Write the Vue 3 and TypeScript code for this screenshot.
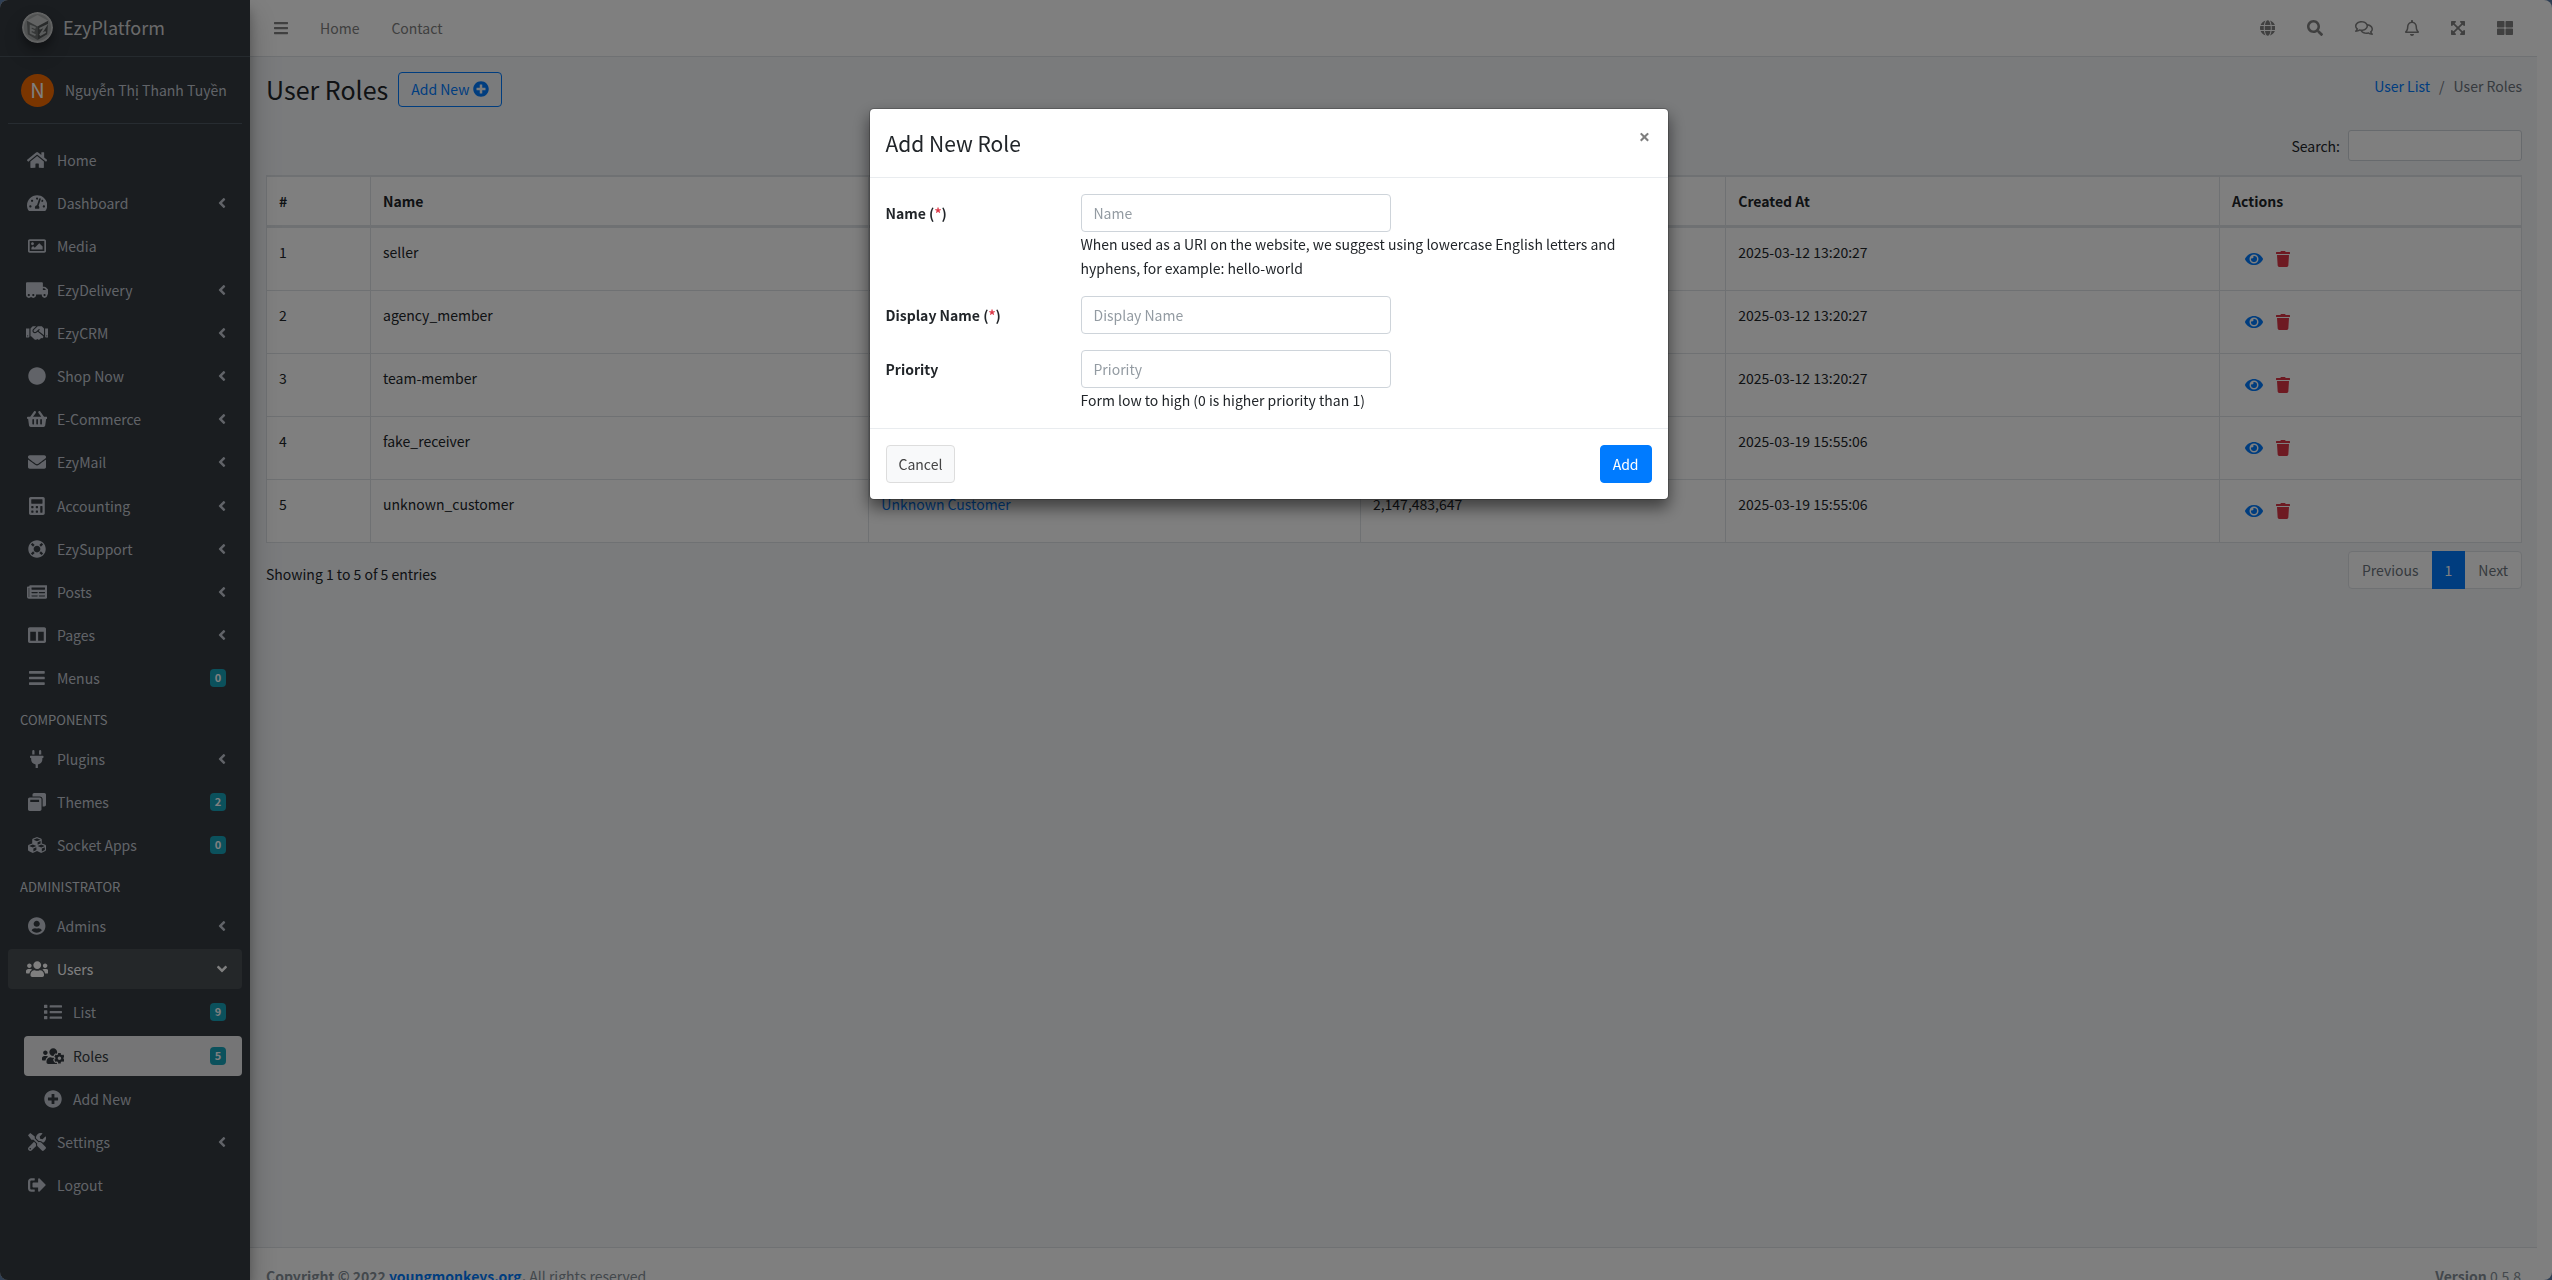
<script setup lang="ts">
import { h, ref } from 'vue'

const icons: Record<string, [number, string]> = {
  bars: [448, 'M16 132h416c8.8 0 16-7.200 16-16V76c0-8.800-7.200-16-16-16H16C7.200 60 0 67.200 0 76v40c0 8.800 7.200 16 16 16zm0 160h416c8.800 0 16-7.200 16-16v-40c0-8.800-7.200-16-16-16H16c-8.800 0-16 7.200-16 16v40c0 8.800 7.200 16 16 16zm0 160h416c8.800 0 16-7.200 16-16v-40c0-8.800-7.200-16-16-16H16c-8.800 0-16 7.200-16 16v40c0 8.800 7.200 16 16 16z'],
  home: [576, 'M280.370 148.260L96 300.110V464a16 16 0 0 0 16 16l112.060-.29a16 16 0 0 0 15.920-16V368a16 16 0 0 1 16-16h64a16 16 0 0 1 16 16v95.640a16 16 0 0 0 16 16.050L464 480a16 16 0 0 0 16-16V300L295.670 148.260a12.190 12.190 0 0 0-15.300 0zM571.600 251.470L488 182.560V44.050a12 12 0 0 0-12-12h-56a12 12 0 0 0-12 12v72.610L318.470 43a48 48 0 0 0-61 0L4.340 251.470a12 12 0 0 0-1.600 16.900l25.500 31A12 12 0 0 0 45.150 301l235.220-193.740a12.190 12.190 0 0 1 15.300 0L530.900 301a12 12 0 0 0 16.900-1.600l25.500-31a12 12 0 0 0-1.700-16.930z'],
  dashboard: [576, 'M288 32C128.940 32 0 160.940 0 320c0 52.800 14.250 102.260 39.060 144.800 5.610 9.620 16.300 15.200 27.440 15.200h443c11.140 0 21.830-5.580 27.440-15.200C561.750 422.260 576 372.800 576 320c0-159.060-128.940-288-288-288zm0 64c14.710 0 26.580 10.130 30.320 23.650-1.110 2.260-2.640 4.230-3.450 6.670l-9.220 27.670c-5.130 3.490-10.970 6.010-17.640 6.010-17.670 0-32-14.330-32-32S270.330 96 288 96zM96 384c-17.670 0-32-14.330-32-32s14.330-32 32-32 32 14.330 32 32-14.330 32-32 32zm48-160c-17.670 0-32-14.330-32-32s14.330-32 32-32 32 14.330 32 32-14.330 32-32 32zm246.770-72.410l-61.330 184C343.130 347.330 352 364.540 352 384c0 11.720-3.380 22.550-8.880 32H232.880c-5.500-9.450-8.880-20.280-8.880-32 0-33.940 26.500-61.430 59.900-63.590l61.340-184.010c4.170-12.560 17.730-19.450 30.360-15.170 12.570 4.190 19.350 17.790 15.170 30.360zm14.660 57.200l15.520-46.550c3.470-1.290 7.130-2.230 11.050-2.230 17.670 0 32 14.330 32 32s-14.330 32-32 32c-11.380-.01-20.890-6.280-26.570-15.220zM480 384c-17.670 0-32-14.330-32-32s14.330-32 32-32 32 14.330 32 32-14.330 32-32 32z'],
  image: [512, 'M464 64H48C21.490 64 0 85.490 0 112v288c0 26.510 21.490 48 48 48h416c26.510 0 48-21.490 48-48V112c0-26.510-21.490-48-48-48zm-6 336H54a6 6 0 0 1-6-6V118a6 6 0 0 1 6-6h404a6 6 0 0 1 6 6v276a6 6 0 0 1-6 6zM128 152c-22.091 0-40 17.909-40 40s17.909 40 40 40 40-17.909 40-40-17.909-40-40-40zM96 352h320v-80l-87.515-87.515c-4.686-4.686-12.284-4.686-16.971 0L192 304l-39.515-39.515c-4.686-4.686-12.284-4.686-16.971 0L96 304v48z'],
  truck: [640, 'M621.300 237.300l-58.500-58.500c-12-12-28.300-18.700-45.300-18.700H480V64c0-17.700-14.300-32-32-32H32C14.300 32 0 46.300 0 64v336c0 44.200 35.800 80 80 80 26.300 0 49.400-12.900 64-32.400 14.600 19.600 37.700 32.400 64 32.400 44.200 0 80-35.800 80-80 0-5.500-.6-10.800-1.600-16h163.200c-1.100 5.200-1.600 10.500-1.600 16 0 44.200 35.800 80 80 80s80-35.800 80-80c0-5.500-.6-10.800-1.600-16H624c8.800 0 16-7.200 16-16v-85.500c0-17-6.700-33.200-18.700-45.200zM80 432c-17.600 0-32-14.400-32-32s14.400-32 32-32 32 14.400 32 32-14.400 32-32 32zm128 0c-17.600 0-32-14.400-32-32s14.400-32 32-32 32 14.400 32 32-14.400 32-32 32zm272-224h37.500c4.300 0 8.300 1.700 11.300 4.700l43.300 43.300H480v-48zm48 224c-17.600 0-32-14.400-32-32s14.400-32 32-32 32 14.400 32 32-14.400 32-32 32z'],
  handshake: [640, 'M434.700 64h-85.900c-8 0-15.700 3-21.600 8.400l-98.300 90c-.1.1-.2.3-.3.4-16.600 15.600-16.300 40.500-2.100 56 12.700 13.900 39.400 17.600 56.100 2.700.1-.1.3-.1.4-.2l79.900-73.200c6.500-5.900 16.700-5.500 22.600 1 6 6.500 5.500 16.600-1 22.600l-26.100 23.900L504 313.800c2.900 2.400 5.500 5 7.900 7.700V128l-54.600-54.600c-5.900-6-14.100-9.400-22.600-9.400zM544 128.200v223.900c0 17.700 14.300 32 32 32h64V128.200h-96zm48 223.900c-8.800 0-16-7.200-16-16s7.200-16 16-16 16 7.200 16 16-7.200 16-16 16zM0 384h64c17.700 0 32-14.300 32-32V128.200H0V384zm48-63.900c8.800 0 16 7.200 16 16s-7.200 16-16 16-16-7.200-16-16c0-8.900 7.200-16 16-16zm435.900 18.600L334.600 217.500l-30 27.500c-29.700 27.100-75.200 24.500-101.700-4.400-26.900-29.400-24.800-74.900 4.400-101.700L289.100 64h-83.800c-8.500 0-16.600 3.400-22.600 9.400L128 128v223.900h18.300l90.500 81.900c27.400 22.300 67.700 18.100 90-9.300l.2-.2 17.900 15.500c15.900 13 39.400 10.500 52.300-5.400l31.400-38.600 5.400 4.400c13.700 11.100 33.900 9.100 45-4.700l9.500-11.700c11.200-13.800 9.100-33.900-4.600-45.100z'],
  circle: [512, 'M256 8C119 8 8 119 8 256s111 248 248 248 248-111 248-248S393 8 256 8z'],
  basket: [576, 'M576 216v16c0 13.255-10.745 24-24 24h-8l-26.113 182.788C514.509 462.435 494.257 480 470.370 480H105.630c-23.887 0-44.139-17.565-47.518-41.212L32 256h-8c-13.255 0-24-10.745-24-24v-16c0-13.255 10.745-24 24-24h67.341l106.780-146.821c10.395-14.292 30.407-17.453 44.701-7.058 14.293 10.395 17.453 30.408 7.058 44.701L170.477 192h235.046L326.120 82.821c-10.395-14.292-7.234-34.306 7.059-44.701 14.291-10.395 34.306-7.235 44.701 7.058L484.659 192H552c13.255 0 24 10.745 24 24zM312 392V280c0-13.255-10.745-24-24-24s-24 10.745-24 24v112c0 13.255 10.745 24 24 24s24-10.745 24-24zm112 0V280c0-13.255-10.745-24-24-24s-24 10.745-24 24v112c0 13.255 10.745 24 24 24s24-10.745 24-24zm-224 0V280c0-13.255-10.745-24-24-24s-24 10.745-24 24v112c0 13.255 10.745 24 24 24s24-10.745 24-24z'],
  envelope: [512, 'M502.300 190.800c3.900-3.100 9.700-.2 9.700 4.700V400c0 26.500-21.500 48-48 48H48c-26.500 0-48-21.500-48-48V195.600c0-5 5.700-7.800 9.700-4.700 22.400 17.400 52.100 39.500 154.100 113.600 21.100 15.400 56.700 47.800 92.200 47.600 35.700.3 72-32.800 92.300-47.600 102-74.100 131.600-96.300 154-113.700zM256 320c23.200.4 56.600-29.200 73.400-41.400 132.700-96.300 142.800-104.700 173.400-128.700 5.800-4.500 9.200-11.500 9.200-18.900v-19c0-26.500-21.500-48-48-48H48c-26.500 0-48 21.500-48 48v19c0 7.400 3.400 14.300 9.200 18.900 30.600 23.900 40.700 32.400 173.400 128.700 16.800 12.200 50.200 41.800 73.400 41.400z'],
  calculator: [448, 'M400 0H48C22.400 0 0 22.400 0 48v416c0 25.600 22.400 48 48 48h352c25.600 0 48-22.400 48-48V48c0-25.600-22.400-48-48-48zM128 435.200c0 6.400-6.400 12.800-12.800 12.800H76.800c-6.400 0-12.800-6.400-12.800-12.800v-38.400c0-6.400 6.400-12.800 12.800-12.800h38.400c6.400 0 12.800 6.400 12.800 12.800v38.400zm0-128c0 6.400-6.400 12.800-12.800 12.800H76.800c-6.400 0-12.800-6.400-12.800-12.800v-38.400c0-6.400 6.400-12.800 12.800-12.800h38.400c6.400 0 12.800 6.400 12.800 12.800v38.400zm128 128c0 6.400-6.400 12.800-12.800 12.800h-38.400c-6.400 0-12.800-6.400-12.800-12.800v-38.400c0-6.400 6.400-12.800 12.800-12.800h38.400c6.400 0 12.800 6.400 12.800 12.800v38.400zm0-128c0 6.400-6.400 12.800-12.800 12.800h-38.400c-6.400 0-12.800-6.400-12.800-12.800v-38.400c0-6.400 6.400-12.800 12.800-12.800h38.400c6.400 0 12.800 6.400 12.800 12.800v38.400zm128 128c0 6.400-6.400 12.800-12.800 12.800h-38.400c-6.400 0-12.800-6.400-12.800-12.800V268.800c0-6.400 6.400-12.800 12.800-12.800h38.400c6.400 0 12.800 6.400 12.800 12.800v166.400zm0-256c0 6.400-6.400 12.800-12.800 12.800H76.800c-6.400 0-12.800-6.400-12.800-12.800V76.800C64 70.400 70.400 64 76.800 64h294.400c6.400 0 12.800 6.400 12.800 12.800v102.400z'],
  lifering: [512, 'M256 8C119.033 8 8 119.033 8 256s111.033 248 248 248 248-111.033 248-248S392.967 8 256 8zm173.696 119.559l-63.399 63.399c-10.987-18.559-26.670-34.252-45.255-45.255l63.399-63.399a218.396 218.396 0 0 1 45.255 45.255zM256 352c-53.019 0-96-42.981-96-96s42.981-96 96-96 96 42.981 96 96-42.981 96-96 96zM127.559 82.304l63.399 63.399c-18.559 10.987-34.252 26.670-45.255 45.255l-63.399-63.399a218.372 218.372 0 0 1 45.255-45.255zM82.304 384.441l63.399-63.399c10.987 18.559 26.670 34.252 45.255 45.255l-63.399 63.399a218.396 218.396 0 0 1-45.255-45.255zm302.137 45.255l-63.399-63.399c18.559-10.987 34.252-26.670 45.255-45.255l63.399 63.399a218.403 218.403 0 0 1-45.255 45.255z'],
  newspaper: [576, 'M552 64H88c-13.255 0-24 10.745-24 24v8H24c-13.255 0-24 10.745-24 24v272c0 30.928 25.072 56 56 56h472c26.510 0 48-21.490 48-48V88c0-13.255-10.745-24-24-24zM56 400a8 8 0 0 1-8-8V144h16v248a8 8 0 0 1-8 8zm236-16H140c-6.627 0-12-5.373-12-12v-8c0-6.627 5.373-12 12-12h152c6.627 0 12 5.373 12 12v8c0 6.627-5.373 12-12 12zm208 0H348c-6.627 0-12-5.373-12-12v-8c0-6.627 5.373-12 12-12h152c6.627 0 12 5.373 12 12v8c0 6.627-5.373 12-12 12zm-208-96H140c-6.627 0-12-5.373-12-12v-8c0-6.627 5.373-12 12-12h152c6.627 0 12 5.373 12 12v8c0 6.627-5.373 12-12 12zm208 0H348c-6.627 0-12-5.373-12-12v-8c0-6.627 5.373-12 12-12h152c6.627 0 12 5.373 12 12v8c0 6.627-5.373 12-12 12zm0-96H140c-6.627 0-12-5.373-12-12v-40c0-6.627 5.373-12 12-12h360c6.627 0 12 5.373 12 12v40c0 6.627-5.373 12-12 12z'],
  columns: [512, 'M464 32H48C21.490 32 0 53.490 0 80v352c0 26.510 21.490 48 48 48h416c26.510 0 48-21.490 48-48V80c0-26.510-21.490-48-48-48zM224 416H64V160h160v256zm224 0H288V160h160v256z'],
  plug: [384, 'M320 32a32 32 0 0 0-64 0v96h64zm48 128H16A16 16 0 0 0 0 176v32a16 16 0 0 0 16 16h16v32a160 160 0 0 0 128 156.800V512h64v-99.200A160 160 0 0 0 352 256v-32h16a16 16 0 0 0 16-16v-32a16 16 0 0 0-16-16zM128 32a32 32 0 0 0-64 0v96h64z'],
  windows: [512, 'M512 48v288c0 26.500-21.500 48-48 48h-48V176c0-44.100-35.900-80-80-80H128V48c0-26.500 21.500-48 48-48h288c26.500 0 48 21.500 48 48zM384 176v288c0 26.500-21.500 48-48 48H48c-26.500 0-48-21.500-48-48V176c0-26.500 21.500-48 48-48h288c26.500 0 48 21.500 48 48zm-68 28c0-6.600-5.400-12-12-12H76c-6.600 0-12 5.400-12 12v52h252v-52z'],
  cubes: [512, 'M488.600 250.200L392 214V105.500c0-15-9.300-28.400-23.400-33.700l-100-37.500c-8.100-3.100-17.100-3.100-25.300 0l-100 37.500c-14.100 5.300-23.400 18.700-23.400 33.700V214l-96.600 36.200C9.300 255.500 0 268.900 0 283.900V394c0 13.600 7.700 26.100 19.900 32.200l100 50c10.100 5.100 22.100 5.100 32.200 0l103.900-52 103.900 52c10.100 5.100 22.100 5.100 32.200 0l100-50c12.200-6.100 19.900-18.600 19.900-32.200V283.900c0-15-9.300-28.400-23.400-33.700zM358 214.800l-85 31.900v-68.200l85-37v73.300zM154 104.100l102-38.200 102 38.200v.6l-102 41.400-102-41.400v-.6zm84 291.100l-85 42.500v-79.100l85-38.800v75.400zm0-112l-102 41.400-102-41.400v-.6l102-38.200 102 38.200v.6zm240 112l-85 42.500v-79.100l85-38.800v75.400zm0-112l-102 41.400-102-41.400v-.6l102-38.200 102 38.200v.6z'],
  usercircle: [496, 'M248 8C111 8 0 119 0 256s111 248 248 248 248-111 248-248S385 8 248 8zm0 96c48.600 0 88 39.400 88 88s-39.400 88-88 88-88-39.400-88-88 39.400-88 88-88zm0 344c-58.700 0-111.300-26.600-146.500-68.200 18.800-35.400 55.600-59.800 98.500-59.800 2.400 0 4.800.4 7.100 1.100 13 4.200 26.600 6.900 40.900 6.900 14.300 0 28-2.700 40.900-6.900 2.300-.7 4.700-1.100 7.100-1.100 42.900 0 79.700 24.400 98.500 59.800C359.300 421.400 306.700 448 248 448z'],
  users: [640, 'M96 224c35.300 0 64-28.700 64-64s-28.700-64-64-64-64 28.700-64 64 28.700 64 64 64zm448 0c35.300 0 64-28.700 64-64s-28.700-64-64-64-64 28.700-64 64 28.700 64 64 64zm32 32h-64c-17.600 0-33.500 7.100-45.100 18.600 40.300 22.100 68.900 62 75.100 109.400h66c17.700 0 32-14.300 32-32v-32c0-35.300-28.700-64-64-64zm-256 0c61.900 0 112-50.100 112-112S381.900 32 320 32 208 82.100 208 144s50.100 112 112 112zm76.800 32h-8.300c-20.800 10-43.900 16-68.500 16s-47.600-6-68.500-16h-8.300C179.600 288 128 339.600 128 403.200V432c0 26.500 21.500 48 48 48h288c26.500 0 48-21.500 48-48v-28.800c0-63.600-51.600-115.200-115.200-115.200zm-223.700-13.400C161.500 263.100 145.600 256 128 256H64c-35.300 0-64 28.700-64 64v32c0 17.700 14.300 32 32 32h65.900c6.300-47.400 34.900-87.300 75.200-109.400z'],
  userscog: [640, 'M610.500 341.300c2.600-14.100 2.600-28.500 0-42.600l25.800-14.900c3-1.700 4.300-5.200 3.300-8.500-6.700-21.600-18.200-41.200-33.200-57.400-2.300-2.500-6-3.100-9-1.400l-25.800 14.900c-10.900-9.300-23.400-16.500-36.900-21.300v-29.800c0-3.400-2.400-6.400-5.700-7.100-22.300-5-45-4.800-66.200 0-3.300.7-5.700 3.700-5.700 7.100v29.800c-13.500 4.800-26 12-36.900 21.300l-25.800-14.900c-2.900-1.700-6.700-1.100-9 1.400-15 16.200-26.500 35.800-33.200 57.400-1 3.300.4 6.800 3.300 8.500l25.800 14.900c-2.600 14.100-2.600 28.500 0 42.600l-25.800 14.900c-3 1.700-4.300 5.200-3.300 8.500 6.700 21.600 18.200 41.100 33.200 57.400 2.300 2.500 6 3.100 9 1.400l25.800-14.900c10.900 9.300 23.400 16.500 36.900 21.300v29.800c0 3.400 2.400 6.400 5.700 7.100 22.300 5 45 4.800 66.200 0 3.300-.7 5.700-3.700 5.700-7.100v-29.800c13.500-4.800 26-12 36.900-21.300l25.800 14.900c2.900 1.700 6.700 1.100 9-1.400 15-16.200 26.500-35.800 33.200-57.400 1-3.300-.4-6.800-3.300-8.500l-25.800-14.900zM496 368.500c-26.800 0-48.500-21.800-48.500-48.500s21.800-48.500 48.500-48.500 48.500 21.800 48.500 48.500-21.700 48.500-48.500 48.500zM96 224c35.300 0 64-28.700 64-64s-28.700-64-64-64-64 28.700-64 64 28.700 64 64 64zm224 32c1.900 0 3.700-.5 5.600-.6 8.300-21.700 20.500-42.100 36.300-59.200 7.400-8 17.900-12.600 28.900-12.600 6.900 0 13.700 1.800 19.600 5.300l7.900 4.600c.8-.5 1.600-.9 2.400-1.400 7-14.600 11.200-30.800 11.200-48 0-61.900-50.100-112-112-112S208 82.100 208 144c0 61.900 50.100 112 112 112zm105.200 194.500c-2.300-1.200-4.600-2.600-6.800-3.900-8.200 4.800-15.300 9.800-27.500 9.800-10.900 0-21.400-4.600-28.900-12.600-18.300-19.800-32.300-43.900-40.200-69.600-10.700-34.500 24.900-49.700 25.800-50.300-.1-2.600-.1-5.200 0-7.800l-7.900-4.600c-3.800-2.200-7-5-9.800-8.100-3.300.2-6.500.6-9.800.6-24.600 0-47.600-6-68.500-16h-8.300C179.600 288 128 339.600 128 403.200V432c0 26.500 21.500 48 48 48h255.400c-3.700-6-6.200-12.800-6.200-20.300v-9.200zM173.100 274.600C161.500 263.100 145.600 256 128 256H64c-35.300 0-64 28.700-64 64v32c0 17.700 14.300 32 32 32h65.900c6.300-47.400 34.900-87.300 75.200-109.400z'],
  list: [512, 'M80 368H16a16 16 0 0 0-16 16v64a16 16 0 0 0 16 16h64a16 16 0 0 0 16-16v-64a16 16 0 0 0-16-16zm0-320H16A16 16 0 0 0 0 64v64a16 16 0 0 0 16 16h64a16 16 0 0 0 16-16V64a16 16 0 0 0-16-16zm0 160H16a16 16 0 0 0-16 16v64a16 16 0 0 0 16 16h64a16 16 0 0 0 16-16v-64a16 16 0 0 0-16-16zm416 176H176a16 16 0 0 0-16 16v32a16 16 0 0 0 16 16h320a16 16 0 0 0 16-16v-32a16 16 0 0 0-16-16zm0-320H176a16 16 0 0 0-16 16v32a16 16 0 0 0 16 16h320a16 16 0 0 0 16-16V80a16 16 0 0 0-16-16zm0 160H176a16 16 0 0 0-16 16v32a16 16 0 0 0 16 16h320a16 16 0 0 0 16-16v-32a16 16 0 0 0-16-16z'],
  plus: [512, 'M256 8C119 8 8 119 8 256s111 248 248 248 248-111 248-248S393 8 256 8zm144 276c0 6.600-5.400 12-12 12h-92v92c0 6.600-5.400 12-12 12h-56c-6.600 0-12-5.400-12-12v-92h-92c-6.600 0-12-5.400-12-12v-56c0-6.600 5.400-12 12-12h92v-92c0-6.600 5.400-12 12-12h56c6.600 0 12 5.400 12 12v92h92c6.600 0 12 5.400 12 12v56z'],
  tools: [512, 'M501.100 395.700L384 278.600c-23.100-23.100-57.600-27.600-85.400-13.900L192 158.100V96L64 0 0 64l96 128h62.100l106.600 106.600c-13.600 27.800-9.200 62.300 13.900 85.400l117.100 117.100c14.600 14.600 38.200 14.600 52.700 0l52.700-52.700c14.500-14.600 14.500-38.200 0-52.700zM331.700 225c28.300 0 54.900 11 74.900 31l19.400 19.400c15.800-6.900 30.800-16.500 43.800-29.500 37.100-37.100 49.700-89.300 37.900-136.700-2.200-9-13.500-12.100-20.100-5.500l-74.400 74.400-67.900-11.300L334 98.900l74.400-74.400c6.600-6.600 3.400-17.900-5.700-20.200-47.400-11.700-99.600.9-136.600 37.900-28.500 28.500-41.900 66.100-41.200 103.600l82.100 82.100c8.100-1.900 16.500-2.900 24.700-2.900zm-103.900 82l-56.700-56.700L18.700 402.800c-25 25-25 65.500 0 90.500s65.500 25 90.500 0l123.600-123.600c-7.600-19.900-9.900-41.600-5-62.700zM64 472c-13.200 0-24-10.800-24-24 0-13.300 10.700-24 24-24s24 10.700 24 24c0 13.200-10.700 24-24 24z'],
  logout: [512, 'M497 273L329 441c-15 15-41 4.500-41-17v-96H152c-13.300 0-24-10.700-24-24v-96c0-13.300 10.700-24 24-24h136V88c0-21.400 25.900-32 41-17l168 168c9.300 9.400 9.300 24.600 0 34zM192 436v-40c0-6.600-5.400-12-12-12H96c-17.700 0-32-14.300-32-32V160c0-17.700 14.300-32 32-32h84c6.600 0 12-5.400 12-12V76c0-6.600-5.400-12-12-12H96c-53 0-96 43-96 96v192c0 53 43 96 96 96h84c6.600 0 12-5.400 12-12z'],
  angle: [256, 'M31.700 239l136-136c9.400-9.400 24.600-9.400 33.900 0l22.600 22.600c9.400 9.400 9.400 24.600 0 33.900L127.900 256l96.400 96.400c9.400 9.400 9.400 24.600 0 33.900L201.700 409c-9.400 9.400-24.600 9.400-33.900 0l-136-136c-9.500-9.400-9.500-24.600-.1-34z'],
  globe: [496, 'M336.500 160C322 70.700 287.800 8 248 8s-74 62.700-88.500 152h177zM152 256c0 22.200 1.200 43.500 3.300 64h185.300c2.100-20.500 3.300-41.800 3.300-64s-1.200-43.500-3.300-64H155.300c-2.100 20.500-3.300 41.800-3.300 64zm324.700-96c-28.600-67.900-86.500-120.400-158-141.600 24.400 33.800 41.200 84.700 50 141.600h108zM177.200 18.400C105.800 39.600 47.800 92.100 19.300 160h108c8.700-56.900 25.500-107.800 49.900-141.600zM487.400 192H372.700c2.100 21 3.300 42.500 3.300 64s-1.200 43-3.300 64h114.600c5.500-20.500 8.600-41.800 8.600-64s-3.100-43.500-8.500-64zM120 256c0-21.500 1.200-43 3.300-64H8.600C3.200 212.500 0 233.800 0 256s3.200 43.500 8.600 64h114.600c-2-21-3.200-42.500-3.200-64zm39.500 96c14.500 89.300 48.700 152 88.500 152s74-62.700 88.500-152h-177zm159.300 141.600c71.400-21.200 129.400-73.700 158-141.600h-108c-8.800 56.900-25.600 107.800-50 141.600zM19.300 352c28.600 67.900 86.500 120.400 158 141.600-24.400-33.800-41.200-84.700-50-141.600h-108z'],
  search: [512, 'M505 442.700L405.300 343c-4.500-4.500-10.600-7-17-7H372c27.600-35.300 44-79.700 44-128C416 93.100 322.900 0 208 0S0 93.100 0 208s93.100 208 208 208c48.300 0 92.700-16.400 128-44v16.300c0 6.400 2.500 12.500 7 17l99.700 99.700c9.400 9.400 24.600 9.400 33.900 0l28.300-28.300c9.400-9.400 9.400-24.600.1-34zM208 336c-70.700 0-128-57.200-128-128 0-70.700 57.200-128 128-128 70.700 0 128 57.200 128 128 0 70.700-57.200 128-128 128z'],
  comments: [576, 'M532 386.200c27.500-27.100 44-61.100 44-98.200 0-80-76.500-146.100-176.200-157.900C368.300 72.500 294.300 32 208 32 93.100 32 0 103.600 0 192c0 37 16.500 71 44 98.200-15.300 30.700-37.300 54.500-37.700 54.900-6.300 6.700-8.100 16.500-4.400 25 3.600 8.500 12 14 21.200 14 53.500 0 96.700-20.200 125.200-38.800 9.200 2.100 18.700 3.700 28.400 4.900C208.100 407.600 281.800 448 368 448c20.800 0 40.800-2.400 59.800-6.800C456.300 459.700 499.400 480 553 480c9.200 0 17.500-5.500 21.200-14 3.600-8.500 1.900-18.300-4.400-25-.4-.3-22.500-24.100-37.800-54.800zm-392.800-92.300L122.100 305c-14.100 9.100-28.500 16.300-43.100 21.400 2.700-4.700 5.400-9.700 8-14.800l15.500-31.100L77.700 256C64.200 242.600 48 220.700 48 192c0-60.700 73.300-112 160-112s160 51.300 160 112-73.300 112-160 112c-16.500 0-33-1.900-49-5.600l-19.800-4.500zM498.300 352l-24.700 24.400 15.500 31.100c2.600 5.100 5.300 10.100 8 14.800-14.600-5.100-29-12.300-43.100-21.400l-17.100-11.100-19.900 4.600c-16 3.700-32.500 5.600-49 5.600-54 0-102.200-20.100-131.300-49.700C338 339.500 416 272.900 416 192c0-3.400-.4-6.700-.7-10C479.700 196.500 528 238.800 528 288c0 28.700-16.200 50.600-29.700 64z'],
  bell: [448, 'M439.390 362.290c-19.320-20.760-55.470-51.990-55.470-154.290 0-77.700-54.480-139.900-127.940-155.160V32c0-17.670-14.320-32-31.980-32s-31.980 14.330-31.980 32v20.840C118.560 68.100 64.080 130.300 64.080 208c0 102.300-36.150 133.530-55.470 154.290-6 6.450-8.660 14.160-8.610 21.710.11 16.400 12.980 32 32.100 32h383.800c19.120 0 32-15.600 32.100-32 .05-7.550-2.610-15.270-8.610-21.710zM67.530 368c21.220-27.970 44.420-74.330 44.530-159.420 0-.2-.06-.38-.06-.58 0-61.860 50.140-112 112-112s112 50.140 112 112c0 .2-.06.38-.06.58.11 85.100 23.310 131.460 44.530 159.420H67.530zM224 512c35.320 0 63.970-28.650 63.970-64H160.030c0 35.350 28.650 64 63.970 64z'],
  expand: [448, 'M448 344v112a23.940 23.940 0 0 1-24 24H312c-21.390 0-32.090-25.900-17-41l36.200-36.200L224 295.600 116.770 402.900 153 439c15.090 15.100 4.390 41-17 41H24a23.940 23.940 0 0 1-24-24V344c0-21.400 25.890-32.100 41-17l36.190 36.200L184.460 256 77.180 148.700 41 185c-15.100 15.100-41 4.400-41-17V56a23.940 23.940 0 0 1 24-24h112c21.390 0 32.090 25.900 17 41l-36.200 36.200L224 216.400l107.230-107.300L295 73c-15.090-15.100-4.390-41 17-41h112a23.940 23.940 0 0 1 24 24v112c0 21.400-25.890 32.100-41 17l-36.190-36.200L263.540 256l107.280 107.300L407 327.100c15.100-15.200 41-4.500 41 16.900z'],
  grid: [512, 'M296 32h192c13.255 0 24 10.745 24 24v160c0 13.255-10.745 24-24 24H296c-13.255 0-24-10.745-24-24V56c0-13.255 10.745-24 24-24zm-80 0H24C10.745 32 0 42.745 0 56v160c0 13.255 10.745 24 24 24h192c13.255 0 24-10.745 24-24V56c0-13.255-10.745-24-24-24zM0 296v160c0 13.255 10.745 24 24 24h192c13.255 0 24-10.745 24-24V296c0-13.255-10.745-24-24-24H24c-13.255 0-24 10.745-24 24zm296 184h192c13.255 0 24-10.745 24-24V296c0-13.255-10.745-24-24-24H296c-13.255 0-24 10.745-24 24v160c0 13.255 10.745 24 24 24z'],
  eye: [576, 'M572.520 241.400C518.290 135.590 410.930 64 288 64S57.680 135.640 3.480 241.410a32.350 32.350 0 0 0 0 29.190C57.710 376.410 165.070 448 288 448s230.320-71.640 284.520-177.410a32.350 32.350 0 0 0 0-29.190zM288 400a144 144 0 1 1 144-144 143.930 143.930 0 0 1-144 144zm0-240a95.310 95.310 0 0 0-25.310 3.790 47.850 47.850 0 0 1-66.900 66.900A95.780 95.780 0 1 0 288 160z'],
  trash: [448, 'M432 32H312l-9.400-18.700A24 24 0 0 0 281.100 0H166.800a23.720 23.720 0 0 0-21.400 13.300L136 32H16A16 16 0 0 0 0 48v32a16 16 0 0 0 16 16h416a16 16 0 0 0 16-16V48a16 16 0 0 0-16-16zM53.200 467a48 48 0 0 0 47.900 45h245.800a48 48 0 0 0 47.900-45L416 128H32z'],
}

const Icon = (props: { name: string }) =>
  h('svg', { class: 'icon', viewBox: `0 0 ${icons[props.name][0]} 512`, 'aria-hidden': 'true' }, [
    h('path', { d: icons[props.name][1], fill: 'currentColor' }),
  ])
Icon.props = ['name']

interface NavItem {
  label: string
  icon: string
  arrow?: boolean
  badge?: number
  open?: boolean
  active?: boolean
  sub?: boolean
}

const sections: { title?: string; items: NavItem[] }[] = [
  {
    items: [
      { label: 'Home', icon: 'home' },
      { label: 'Dashboard', icon: 'dashboard', arrow: true },
      { label: 'Media', icon: 'image' },
      { label: 'EzyDelivery', icon: 'truck', arrow: true },
      { label: 'EzyCRM', icon: 'handshake', arrow: true },
      { label: 'Shop Now', icon: 'circle', arrow: true },
      { label: 'E-Commerce', icon: 'basket', arrow: true },
      { label: 'EzyMail', icon: 'envelope', arrow: true },
      { label: 'Accounting', icon: 'calculator', arrow: true },
      { label: 'EzySupport', icon: 'lifering', arrow: true },
      { label: 'Posts', icon: 'newspaper', arrow: true },
      { label: 'Pages', icon: 'columns', arrow: true },
      { label: 'Menus', icon: 'bars', badge: 0 },
    ],
  },
  {
    title: 'COMPONENTS',
    items: [
      { label: 'Plugins', icon: 'plug', arrow: true },
      { label: 'Themes', icon: 'windows', badge: 2 },
      { label: 'Socket Apps', icon: 'cubes', badge: 0 },
    ],
  },
  {
    title: 'ADMINISTRATOR',
    items: [
      { label: 'Admins', icon: 'usercircle', arrow: true },
      { label: 'Users', icon: 'users', arrow: true, open: true },
      { label: 'List', icon: 'list', badge: 9, sub: true },
      { label: 'Roles', icon: 'userscog', badge: 5, sub: true, active: true },
      { label: 'Add New', icon: 'plus', sub: true },
      { label: 'Settings', icon: 'tools', arrow: true },
      { label: 'Logout', icon: 'logout' },
    ],
  },
]

const tools = [
  { icon: 'globe', label: 'Language' },
  { icon: 'search', label: 'Search' },
  { icon: 'comments', label: 'Messages' },
  { icon: 'bell', label: 'Notifications' },
  { icon: 'expand', label: 'Fullscreen' },
  { icon: 'grid', label: 'Panels' },
]

const roles = [
  { name: 'seller', display: '', priority: '', created: '2025-03-12 13:20:27' },
  { name: 'agency_member', display: '', priority: '', created: '2025-03-12 13:20:27' },
  { name: 'team-member', display: '', priority: '', created: '2025-03-12 13:20:27' },
  { name: 'fake_receiver', display: '', priority: '', created: '2025-03-19 15:55:06' },
  { name: 'unknown_customer', display: 'Unknown Customer', priority: '2,147,483,647', created: '2025-03-19 15:55:06' },
]

const search = ref('')
const modalOpen = ref(true)
const form = ref({ name: '', displayName: '', priority: '' })
</script>

<template>
  <div class="app">
    <aside class="sidebar">
      <a class="brand" href="#">
        <svg class="logo" viewBox="0 0 32 32" aria-hidden="true">
          <circle cx="16" cy="16" r="16" fill="#c2c4c4" />
          <circle cx="16" cy="16" r="14" fill="#a3a6a6" />
          <path d="M16 3 27 9 16 15 5 9z" fill="#c4c6c6" />
          <path d="M5 9 16 15V29L6 23z" fill="#6c7070" />
          <path d="M27 9 16 15V29L26 23z" fill="#505454" />
          <path d="M14 16.500 9 14.500V21.500L14 24M9 18 13 19.700" fill="none" stroke="#b5b8b8" stroke-width="2" />
          <path d="M18 17.500 24.500 14.500 18.500 24 24.500 20.500" fill="none" stroke="#b5b8b8" stroke-width="2" />
        </svg>
        <span>EzyPlatform</span>
      </a>
      <a class="user" href="#">
        <span class="avatar">N</span>
        <span>Nguyễn Thị Thanh Tuyền</span>
      </a>
      <nav class="nav">
        <template v-for="(section, i) in sections" :key="i">
          <h2 v-if="section.title" class="nav-header">{{ section.title }}</h2>
          <ul class="nav-list">
            <li v-for="item in section.items" :key="item.label" :class="{ sub: item.sub }">
              <a class="nav-link" :class="{ open: item.open, active: item.active }" href="#">
                <span class="nav-icon"><Icon :name="item.icon" /></span>
                <span class="nav-label">{{ item.label }}</span>
                <span v-if="item.arrow" class="arrow" :class="{ down: item.open }"><Icon name="angle" /></span>
                <span v-if="item.badge !== undefined" class="badge">{{ item.badge }}</span>
              </a>
            </li>
          </ul>
        </template>
      </nav>
    </aside>

    <div class="page">
      <header class="topbar">
        <button class="tool menu" type="button" aria-label="Toggle menu"><Icon name="bars" /></button>
        <a href="#">Home</a>
        <a href="#">Contact</a>
        <div class="tools">
          <button v-for="t in tools" :key="t.icon" class="tool" type="button" :aria-label="t.label">
            <Icon :name="t.icon" />
          </button>
        </div>
      </header>

      <main class="content">
        <div class="title-row">
          <h1>User Roles</h1>
          <button class="btn-outline" type="button" @click="modalOpen = true">Add New <Icon name="plus" /></button>
          <nav class="breadcrumb" aria-label="Breadcrumb">
            <a href="#">User List</a><span>/</span><span>User Roles</span>
          </nav>
        </div>

        <div class="filter">
          <label for="table-search">Search:</label>
          <input id="table-search" v-model="search" type="search" />
        </div>

        <table class="roles">
          <colgroup>
            <col class="c-index" /><col class="c-name" /><col class="c-display" />
            <col class="c-priority" /><col class="c-created" /><col />
          </colgroup>
          <thead>
            <tr>
              <th>#</th>
              <th>Name</th>
              <th></th>
              <th></th>
              <th>Created At</th>
              <th>Actions</th>
            </tr>
          </thead>
          <tbody>
            <tr v-for="(r, i) in roles" :key="r.name">
              <td>{{ i + 1 }}</td>
              <td>{{ r.name }}</td>
              <td><a v-if="r.display" href="#">{{ r.display }}</a></td>
              <td>{{ r.priority }}</td>
              <td>{{ r.created }}</td>
              <td>
                <div class="actions">
                  <button class="view" type="button" :aria-label="`View ${r.name}`"><Icon name="eye" /></button>
                  <button class="delete" type="button" :aria-label="`Delete ${r.name}`"><Icon name="trash" /></button>
                </div>
              </td>
            </tr>
          </tbody>
        </table>

        <div class="table-foot">
          <p>Showing 1 to 5 of 5 entries</p>
          <div class="pager">
            <button type="button">Previous</button>
            <button class="current" type="button">1</button>
            <button type="button">Next</button>
          </div>
        </div>
      </main>

      <footer class="footer">
        <p><strong>Copyright © 2022 <a href="#">youngmonkeys.org</a>.</strong> All rights reserved.</p>
        <p><strong>Version</strong> 0.5.8</p>
      </footer>
    </div>
  </div>

  <div v-if="modalOpen" class="overlay">
    <form class="modal" role="dialog" aria-labelledby="modal-title" @submit.prevent>
      <header class="modal-head">
        <h2 id="modal-title">Add New Role</h2>
        <button class="close" type="button" aria-label="Close" @click="modalOpen = false">×</button>
      </header>
      <div class="modal-body">
        <label for="f-name">Name (<span class="req">*</span>)</label>
        <div>
          <input id="f-name" v-model="form.name" type="text" placeholder="Name" />
          <p>When used as a URI on the website, we suggest using lowercase English letters and hyphens, for example: hello-world</p>
        </div>
        <label for="f-display">Display Name (<span class="req">*</span>)</label>
        <div>
          <input id="f-display" v-model="form.displayName" type="text" placeholder="Display Name" />
        </div>
        <label for="f-priority">Priority</label>
        <div>
          <input id="f-priority" v-model="form.priority" type="text" placeholder="Priority" />
          <p>Form low to high (0 is higher priority than 1)</p>
        </div>
      </div>
      <footer class="modal-foot">
        <button class="cancel" type="button" @click="modalOpen = false">Cancel</button>
        <button class="add" type="submit">Add</button>
      </footer>
    </form>
  </div>
</template>

<style>
html {
  background: #5f7fa8;
}
body {
  margin: 0;
}
</style>

<style scoped>
.app,
.overlay {
  font-family: "Noto Sans CJK SC", "Noto Sans", sans-serif;
  font-size: 14px;
  line-height: 24px;
  color: #212529;
  box-sizing: border-box;
}
.app *,
.overlay * {
  box-sizing: border-box;
}
h1,
h2,
p,
ul {
  margin: 0;
  padding: 0;
  font-weight: 400;
}
ul {
  list-style: none;
}
button,
input {
  font: inherit;
  margin: 0;
}
button {
  padding: 0;
  border: 0;
  background: none;
  color: inherit;
}
a {
  color: #007bff;
  text-decoration: none;
}
.icon {
  display: block;
  height: 16px;
}

.app {
  display: flex;
  height: 100vh;
  overflow: hidden;
  padding-right: 15px;
  border-radius: 8px;
  background: #fff;
}

/* Sidebar */
.sidebar {
  position: relative;
  z-index: 1;
  flex: none;
  width: 250px;
  background: #343a40;
  box-shadow: 0 14px 28px rgba(0, 0, 0, 0.25), 0 10px 10px rgba(0, 0, 0, 0.22);
}
.brand {
  display: flex;
  align-items: center;
  gap: 10px;
  height: 57px;
  padding: 0 22px 2px;
  border-bottom: 1px solid #4b545c;
  font-size: 18px;
  color: rgba(255, 255, 255, 0.8);
}
.logo {
  width: 31px;
  height: 31px;
  border-radius: 50%;
  box-shadow: 0 10px 20px rgba(0, 0, 0, 0.19), 0 6px 6px rgba(0, 0, 0, 0.23);
}
.user {
  display: flex;
  align-items: center;
  gap: 11px;
  height: 67px;
  margin: 0 8px 16px;
  padding: 0 13px;
  border-bottom: 1px solid #4f5962;
  color: #c2c7d0;
  white-space: nowrap;
}
.avatar {
  display: flex;
  align-items: center;
  justify-content: center;
  flex: none;
  width: 33px;
  height: 33px;
  border-radius: 50%;
  background: #f56a00;
  color: #fff;
  font-size: 20px;
}
.nav {
  padding: 0 8px;
}
.nav-header {
  padding: 6px 12px 7px;
  font-size: 13px;
  color: #d0d4db;
}
.nav-list > li {
  padding-bottom: 3px;
}
.nav-list > li:nth-child(5n + 3) {
  padding-bottom: 4px;
}
.nav-list > .sub {
  padding-left: 16px;
}
.nav-link {
  display: flex;
  align-items: center;
  height: 40px;
  padding: 0 16px;
  border-radius: 4px;
  color: #c2c7d0;
}
.nav-link.open {
  background: rgba(255, 255, 255, 0.1);
  color: #fff;
}
.nav-link.active {
  background: rgba(255, 255, 255, 0.9);
  color: #343a40;
}
.nav-icon {
  display: flex;
  justify-content: center;
  width: 28px;
  margin: 0 6px 0 -1px;
}
.nav-icon .icon {
  height: 18px;
}
.nav-label {
  flex: 1;
}
.arrow {
  display: flex;
  justify-content: center;
  width: 8px;
}
.arrow .icon {
  flex: none;
}
.arrow.down .icon {
  transform: rotate(-90deg);
}
.badge {
  width: 16px;
  height: 18px;
  border-radius: 4px;
  background: #17a2b8;
  color: #fff;
  font-size: 11px;
  font-weight: 700;
  line-height: 17px;
  text-align: center;
}

/* Page */
.page {
  flex: 1;
  display: flex;
  flex-direction: column;
  min-width: 0;
  background: #f4f6f9;
}
.topbar {
  display: flex;
  align-items: center;
  gap: 32px;
  flex: none;
  height: 57px;
  padding: 0 24px;
  border-bottom: 1px solid #dee2e6;
  background: #fff;
}
.topbar a,
.tool {
  color: #808080;
}
.tools {
  display: flex;
  align-items: center;
  gap: 32px;
  margin-left: auto;
}
.content {
  flex: none;
  min-height: calc(100vh - 90px);
  padding: 14px 15px 0 16px;
}
.title-row {
  display: flex;
  align-items: center;
  height: 36px;
}
h1 {
  font-size: 25px;
  line-height: 36px;
}
.btn-outline {
  display: flex;
  align-items: center;
  gap: 4px;
  height: 35px;
  margin-left: 10px;
  padding: 0 12px;
  border: 1px solid #007bff;
  border-radius: 4px;
  color: #007bff;
}
.breadcrumb {
  display: flex;
  gap: 9px;
  margin: 0 0 6px auto;
  color: #6c757d;
}
.filter {
  display: flex;
  justify-content: flex-end;
  align-items: center;
  gap: 8px;
  margin: 23px 0 14px;
}
.filter input {
  width: 174px;
  height: 31px;
  padding: 4px 8px;
  border: 1px solid #ced4da;
  border-radius: 3px;
  background: #fff;
}

.roles {
  width: 100%;
  table-layout: fixed;
  border: 1px solid #dee2e6;
  border-right-width: 0;
  border-spacing: 0;
  background: #fff;
}
.c-index {
  width: 104px;
}
.c-name {
  width: 22.1%;
}
.c-display {
  width: 21.8%;
}
.c-priority {
  width: 16.2%;
}
.c-created {
  width: 21.9%;
}
th,
td {
  padding: 12px;
  border: solid #dee2e6;
  border-width: 1px 1px 0 0;
  text-align: left;
  vertical-align: top;
}
th {
  border-bottom-width: 2px;
  font-weight: 700;
}
.actions {
  display: flex;
  align-items: center;
  height: 38px;
}
.view {
  padding: 0 13px;
  color: #007bff;
}
.delete {
  color: #dc3545;
}
.table-foot {
  display: flex;
  justify-content: space-between;
  padding-top: 8px;
}
.table-foot p {
  padding-top: 11px;
}
.pager {
  display: flex;
  border: 1px solid #dee2e6;
  border-radius: 4px;
  background: #fff;
}
.pager button {
  height: 36px;
  padding: 0 13px;
  color: #6c757d;
}
.pager .current {
  height: 38px;
  margin: -1px 0;
  background: #007bff;
  color: #fff;
}
.footer {
  display: flex;
  justify-content: space-between;
  flex: none;
  padding: 16px;
  border-top: 1px solid #dee2e6;
  background: #fff;
  color: #869099;
}

/* Dialog */
.overlay {
  position: fixed;
  inset: 0;
  z-index: 10;
  padding: 108px 15px 0 0;
  background: rgba(0, 0, 0, 0.5);
}
.modal {
  max-width: 800px;
  margin: 0 auto;
  border: 1px solid rgba(0, 0, 0, 0.2);
  border-radius: 5px;
  background: #fff;
  background-clip: padding-box;
  box-shadow: 0 8px 16px rgba(0, 0, 0, 0.5);
}
.modal-head {
  display: flex;
  justify-content: space-between;
  align-items: flex-start;
  padding: 16px;
  border-bottom: 1px solid #e9ecef;
}
.modal-head h2 {
  font-size: 21px;
  line-height: 36px;
}
.close {
  width: 14px;
  font-family: "Noto Sans", sans-serif;
  font-size: 20px;
  font-weight: 700;
  line-height: 24px;
  color: #7f7f7f;
}
.modal-body {
  display: grid;
  grid-template-columns: 195px 1fr;
  row-gap: 16px;
  padding: 16px;
}
.modal-body label {
  padding-top: 7px;
  font-weight: 700;
}
.req {
  color: #dc3545;
}
.modal-body div {
  display: flex;
  flex-direction: column;
}
.modal-body input {
  width: 310px;
  height: 38px;
  padding: 0 12px;
  border: 1px solid #ced4da;
  border-radius: 4px;
  background: #fff;
}
.modal-body input::placeholder {
  color: #939ba2;
}
.modal-foot {
  display: flex;
  justify-content: space-between;
  padding: 16px;
  border-top: 1px solid #e9ecef;
}
.modal-foot button {
  height: 38px;
  padding: 0 12px;
  border: 1px solid #ddd;
  border-radius: 4px;
  background: #f8f9fa;
  color: #444;
}
.modal-foot .add {
  border-color: #007bff;
  background: #007bff;
  color: #fff;
}
</style>
